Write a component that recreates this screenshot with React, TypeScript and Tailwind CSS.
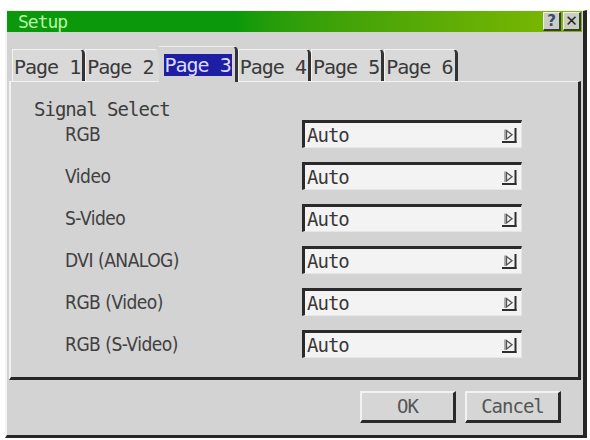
import React from "react";

const tabs = ["Page 1", "Page 2", "Page 3", "Page 4", "Page 5", "Page 6"];
const active = 2;

const signals = ["RGB", "Video", "S-Video", "DVI (ANALOG)", "RGB (Video)", "RGB (S-Video)"];

const mono = "font-['DejaVu_Sans_Mono','Liberation_Mono',monospace] tracking-[-1px]";
const narrow = "font-['Liberation_Sans_Narrow','DejaVu_Sans_Condensed','DejaVu_Sans',sans-serif]";

function StepArrow() {
  return (
    <svg width="18" height="18" viewBox="0 0 18 18">
      <line x1="5" y1="3.5" x2="5" y2="14" stroke="#6a6a6a" strokeWidth="1" />
      <path d="M6.5 4.5 L12 8.8 L6.5 13 Z" fill="none" stroke="#555" strokeWidth="1.3" />
      <line x1="15.5" y1="2" x2="15.5" y2="17" stroke="#2e2e2e" strokeWidth="2" />
      <line x1="2" y1="16" x2="16.5" y2="16" stroke="#2e2e2e" strokeWidth="2" />
    </svg>
  );
}

function TitleBar() {
  return (
    <div className="mr-[1px] h-[21px] flex items-center justify-between bg-linear-to-r from-[#0b990b] from-40% to-[#80b900]">
      <span className={`pl-[11px] text-[18px] leading-[21px] text-[#b6f5a6] ${mono}`}>Setup</span>
      <div className="flex gap-[2px] pr-[1px]">
        <div className="w-[18px] h-[19px] flex items-center justify-center bg-[#c9cdc2] border-t border-l border-[#eef0ea] border-r-2 border-b-2 border-r-[#3a3a3a] border-b-[#3a3a3a] text-[15px] font-bold leading-none text-[#3a4a7a] font-['DejaVu_Sans',sans-serif]">
          ?
        </div>
        <div className="w-[18px] h-[19px] flex items-center justify-center bg-[#c9cdc2] border-t border-l border-[#eef0ea] border-r-2 border-b-2 border-r-[#3a3a3a] border-b-[#3a3a3a] text-[15px] leading-none text-[#222] font-['DejaVu_Sans',sans-serif]">
          ✕
        </div>
      </div>
    </div>
  );
}

function Tabs() {
  return (
    <div className="mt-[14px] h-[35px] pl-[5px] flex items-end">
      {tabs.map((t, i) =>
        i === active ? (
          <div
            key={t}
            className="h-[36px] -mb-[1px] pl-[5px] pr-[3px] flex items-center bg-[#d3d3d3] border-t border-t-[#efefef] border-r-[3px] border-r-[#333] rounded-tr-[5px] relative z-10"
          >
            <span className={`h-[22px] px-[1px] bg-[#1d1ea3] text-[20px] leading-[22px] text-[#dcdcff] ${mono}`}>{t}</span>
          </div>
        ) : (
          <div
            key={t}
            className={`h-[32px] pl-[1px] pr-[2px] flex items-center bg-[#d9d9d9] border-t border-l border-t-[#f2f2f2] border-l-[#f2f2f2] border-r-[3px] rounded-tr-[5px] ${
              i === active - 1 ? "border-r-transparent" : "border-r-[#333]"
            }`}
          >
            <span className={`text-[20px] leading-[24px] pt-[2px] text-[#3a3a3a] ${mono}`}>{t}</span>
          </div>
        )
      )}
    </div>
  );
}

function SelectBox() {
  return (
    <div className="w-[220px] h-[28px] flex items-center justify-between bg-[#f3f3f3] border-t-[3px] border-l-[3px] border-t-[#2a2a2a] border-l-[#2a2a2a] border-b border-r border-b-[#e6e6e6] border-r-[#e6e6e6] pr-[3px]">
      <span className={`pl-[2px] text-[19px] leading-[22px] text-[#383838] ${mono}`}>Auto</span>
      <StepArrow />
    </div>
  );
}

function Panel() {
  return (
    <div className="mx-[2px] h-[299px] bg-[#d3d3d3] border-t border-l-2 border-t-[#f2f2f2] border-l-[#f2f2f2] border-r-[3px] border-b-[3px] border-r-[#262626] border-b-[#262626] pt-[16px]">
      <div className={`pl-[23px] h-[22px] text-[19px] leading-[22px] text-[#3c3c3c] ${mono}`}>Signal Select</div>
      <div className="flex flex-col gap-[14px]">
        {signals.map((s) => (
          <div key={s} className="h-[28px] flex items-center">
            <span className={`ml-[54px] w-[237px] text-[19px] tracking-[-0.5px] text-[#404040] ${narrow}`}>{s}</span>
            <SelectBox />
          </div>
        ))}
      </div>
    </div>
  );
}

function Footer() {
  const btn =
    "w-[96px] h-[32px] flex items-center justify-center bg-[#d6d6d6] border-t-2 border-l-2 border-t-[#f2f2f2] border-l-[#f2f2f2] border-r-[3px] border-b-[3px] border-r-[#2a2a2a] border-b-[#2a2a2a] text-[19px] text-[#555] " +
    mono;
  return (
    <div className="mt-[11px] pr-[22px] flex justify-end gap-[9px]">
      <div className={btn}>OK</div>
      <div className={btn}>Cancel</div>
    </div>
  );
}

export default function App() {
  return (
    <div className="w-[590px] h-[440px] bg-white pt-[10px] pl-[5px] overflow-hidden">
      <div className="w-[582px] h-[428px] flex flex-col bg-[#d3d3d3] border-t border-l-2 border-t-[#f4f4f4] border-l-[#f4f4f4] border-r-4 border-b-[3px] border-r-[#262626] border-b-[#262626]">
        <TitleBar />
        <Tabs />
        <Panel />
        <Footer />
      </div>
    </div>
  );
}
